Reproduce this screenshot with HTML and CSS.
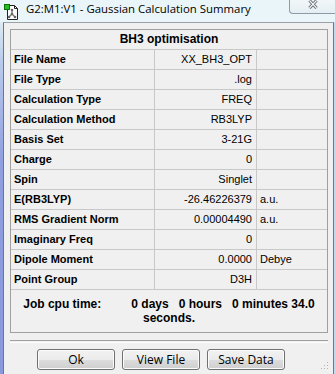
FILE: index.html
```html
<!DOCTYPE html>
<html>
<head>
<meta charset="utf-8">
<link rel="stylesheet" href="styles.css">
</head>
<body>
<div class="window">
  <div class="titlebar">
    <svg class="app-icon" width="16" height="16" viewBox="0 0 16 16">
      <path d="M3.5 1.5h7l3 3v11h-10z" fill="#fff" stroke="#222" stroke-width="1"/>
      <path d="M10.5 1.5v3h3" fill="none" stroke="#222" stroke-width="1"/>
      <path d="M8 6v4M8 10l-3 3M8 10l3 3" stroke="#777" stroke-width="1.3" fill="none"/>
      <circle cx="8" cy="6" r="1.3" fill="#666"/>
      <circle cx="8" cy="10" r="1.3" fill="#666"/>
      <circle cx="5" cy="13" r="1.3" fill="#666"/>
      <circle cx="11" cy="13" r="1.3" fill="#666"/>
      <rect x="0.5" y="0.5" width="5" height="5" fill="#1fc21f" stroke="#0a6e0a" stroke-width="1"/>
    </svg>
    <span class="title">G2:M1:V1 - Gaussian Calculation Summary</span>
    <div class="close-btn">
      <svg width="10" height="9" viewBox="0 0 10 9">
        <path d="M1.5 0.5l7 7.5M8.5 0.5l-7 7.5" stroke="#59606a" stroke-width="3" fill="none"/>
        <path d="M1.5 0.5l7 7.5M8.5 0.5l-7 7.5" stroke="#f4f6f8" stroke-width="1.2" fill="none"/>
      </svg>
    </div>
  </div>
  <div class="frame-row">
    <div class="frame-left"></div>
    <div class="client">
      <div class="summary">
        <div class="summary-head">BH3 optimisation</div>
        <div class="summary-grid">
          <div class="cell label">File Name</div><div class="cell value">XX_BH3_OPT</div><div class="cell unit"></div>
          <div class="cell label">File Type</div><div class="cell value">.log</div><div class="cell unit"></div>
          <div class="cell label">Calculation Type</div><div class="cell value">FREQ</div><div class="cell unit"></div>
          <div class="cell label">Calculation Method</div><div class="cell value">RB3LYP</div><div class="cell unit"></div>
          <div class="cell label">Basis Set</div><div class="cell value">3-21G</div><div class="cell unit"></div>
          <div class="cell label">Charge</div><div class="cell value">0</div><div class="cell unit"></div>
          <div class="cell label">Spin</div><div class="cell value">Singlet</div><div class="cell unit"></div>
          <div class="cell label">E(RB3LYP)</div><div class="cell value">-26.46226379</div><div class="cell unit">a.u.</div>
          <div class="cell label">RMS Gradient Norm</div><div class="cell value">0.00004490</div><div class="cell unit">a.u.</div>
          <div class="cell label">Imaginary Freq</div><div class="cell value">0</div><div class="cell unit"></div>
          <div class="cell label">Dipole Moment</div><div class="cell value">0.0000</div><div class="cell unit">Debye</div>
          <div class="cell label">Point Group</div><div class="cell value">D3H</div><div class="cell unit"></div>
        </div>
        <div class="cpu">
          <div class="cpu-line">Job cpu time:         0 days   0 hours   0 minutes 34.0</div>
          <div class="cpu-line">seconds.</div>
        </div>
      </div>
      <div class="separator"></div>
      <div class="buttons">
        <button class="btn">Ok</button>
        <button class="btn">View File</button>
        <button class="btn">Save Data</button>
        <svg class="grip" width="8" height="8" viewBox="0 0 8 8">
          <rect x="6" y="0" width="1" height="1" fill="#b4b4b4"/>
          <rect x="3" y="3" width="1" height="1" fill="#b4b4b4"/>
          <rect x="6" y="3" width="1" height="1" fill="#b4b4b4"/>
          <rect x="0" y="6" width="1" height="1" fill="#b4b4b4"/>
          <rect x="3" y="6" width="1" height="1" fill="#b4b4b4"/>
          <rect x="6" y="6" width="1" height="1" fill="#b4b4b4"/>
        </svg>
      </div>
    </div>
    <div class="frame-right"></div>
  </div>
</div>
</body>
</html>
```

FILE: styles.css
```css
html, body {
  margin: 0;
  padding: 0;
}
body {
  width: 335px;
  height: 374px;
  overflow: hidden;
  background: #f0f0f0;
}
.window {
  width: 335px;
  height: 374px;
  display: flex;
  flex-direction: column;
}
.titlebar {
  height: 22px;
  flex: none;
  display: flex;
  align-items: flex-start;
  background: #e9f5f8;
}
.app-icon {
  margin: 4px 0 0 4px;
  flex: none;
}
.title {
  margin-left: 6px;
  font-family: "Open Sans", "DejaVu Sans", sans-serif;
  font-size: 11.4px;
  line-height: 17px;
  color: #000;
  white-space: nowrap;
}
.close-btn {
  margin-left: auto;
  width: 46px;
  height: 14px;
  box-sizing: border-box;
  border: 1px solid #8e9aa5;
  border-top: none;
  border-right: none;
  border-radius: 0 0 0 4px;
  background: linear-gradient(#f1f7f9, #e4eef2);
  display: flex;
  justify-content: center;
  align-items: flex-start;
}
.close-btn svg {
  margin-left: 1px;
}
.frame-row {
  flex: 1;
  display: flex;
  min-height: 0;
}
.frame-left {
  width: 3px;
  flex: none;
  background: linear-gradient(#dcebf3 0, #b9cbec 40px, #8f9fe0 140px, #8a98dd 100%);
}
.frame-right {
  width: 1px;
  flex: none;
  background: #c9d9ee;
}
.client {
  flex: 1;
  background: #f0f0f0;
  border-left: 1px solid #6f7880;
  border-right: 1px solid #6f7880;
  border-top: 1px solid #9aa2a8;
  display: flex;
  flex-direction: column;
  font-family: "Liberation Sans", Arial, sans-serif;
  color: #000;
}
.summary {
  margin: 6px 0 0 6px;
  width: 318px;
  box-sizing: border-box;
  border: 1px solid #a0a0a0;
}
.summary-head {
  height: 20px;
  box-sizing: border-box;
  border-bottom: 1px solid #c8c8c8;
  text-align: center;
  font-weight: bold;
  font-size: 12px;
  line-height: 19px;
}
.summary-grid {
  display: grid;
  grid-template-columns: 144px 102px 1fr;
  grid-auto-rows: 20px;
}
.cell {
  box-sizing: border-box;
  border-bottom: 1px solid #c8c8c8;
  font-size: 11px;
  line-height: 19px;
  white-space: nowrap;
  overflow: hidden;
}
.label {
  border-right: 1px solid #c8c8c8;
  padding-left: 3px;
  font-weight: bold;
}
.value {
  border-right: 1px solid #c8c8c8;
  text-align: right;
  padding-right: 4px;
}
.unit {
  padding-left: 3px;
}
.cpu {
  padding: 7px 0 7px;
  text-align: center;
  font-weight: bold;
  font-size: 12px;
  line-height: 14px;
}
.cpu-line {
  white-space: pre;
}
.separator {
  margin: 7px 0 0 6px;
  width: 318px;
  height: 1px;
  border-top: 1px solid #a0a0a0;
  border-bottom: 1px solid #ffffff;
}
.buttons {
  display: flex;
  gap: 7px;
  margin-top: 6px;
  padding-left: 33px;
  align-items: flex-start;
}
.btn {
  width: 78px;
  height: 21px;
  box-sizing: border-box;
  margin: 0;
  padding: 0;
  border: 1px solid #707070;
  border-radius: 3px;
  background: linear-gradient(#f2f2f2 0, #ebebeb 50%, #dddddd 50%, #cfcfcf 100%);
  box-shadow: inset 0 0 0 1px #fcfcfc;
  font-family: "Open Sans", "DejaVu Sans", sans-serif;
  font-size: 12px;
  line-height: 18px;
  color: #000;
}
.grip {
  margin-left: auto;
  margin-right: 4px;
  margin-top: 13px;
}
```
